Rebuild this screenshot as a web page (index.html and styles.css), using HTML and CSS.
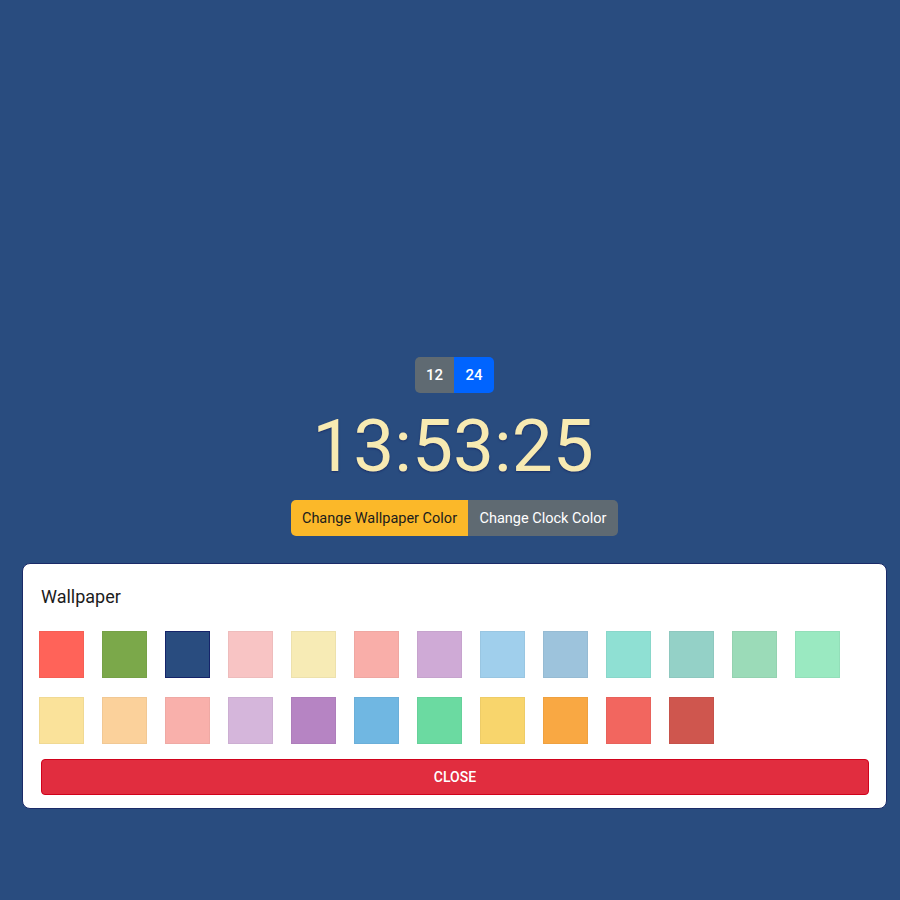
FILE: index.html
```html
<!DOCTYPE html>
<html>
<head>
<meta charset="utf-8">
<link rel="stylesheet" href="styles.css">
</head>
<body>
<div class="page">
  <div class="toggle">
    <button class="tbtn t12">12</button><button class="tbtn t24">24</button>
  </div>
  <div class="clock">13:53:25</div>
  <div class="modes">
    <button class="mbtn wall">Change Wallpaper Color</button><button class="mbtn clk">Change Clock Color</button>
  </div>
  <div class="card">
    <div class="title">Wallpaper</div>
    <div class="swatches">
      <span class="sw" style="background:#ff6359"></span>
      <span class="sw" style="background:#7ba84a"></span>
      <span class="sw" style="background:#294c7f;border-color:#15246a"></span>
      <span class="sw" style="background:#f8c4c4"></span>
      <span class="sw" style="background:#f7ebb5"></span>
      <span class="sw" style="background:#f9aea9"></span>
      <span class="sw" style="background:#cfaad6"></span>
      <span class="sw" style="background:#a0cfec"></span>
      <span class="sw" style="background:#9dc3dc"></span>
      <span class="sw" style="background:#8fe0d3"></span>
      <span class="sw" style="background:#94d1c7"></span>
      <span class="sw" style="background:#9bdbb8"></span>
      <span class="sw" style="background:#9ae9c1"></span>
      <span class="sw" style="background:#fae29a"></span>
      <span class="sw" style="background:#fbd19b"></span>
      <span class="sw" style="background:#f9b0ab"></span>
      <span class="sw" style="background:#d5b6db"></span>
      <span class="sw" style="background:#b684c3"></span>
      <span class="sw" style="background:#70b7e2"></span>
      <span class="sw" style="background:#6bdaa1"></span>
      <span class="sw" style="background:#f8d56c"></span>
      <span class="sw" style="background:#f9a843"></span>
      <span class="sw" style="background:#f2665f"></span>
      <span class="sw" style="background:#cf564e"></span>
    </div>
    <button class="close">CLOSE</button>
  </div>
</div>
</body>
</html>
```
FILE: styles.css
```css
html, body {
  margin: 0;
  padding: 0;
  height: 100%;
  background: #294c7f;
  font-family: Roboto, "Liberation Sans", sans-serif;
}
.page {
  display: flex;
  flex-direction: column;
  align-items: center;
  padding-top: 357px;
}
.toggle {
  display: flex;
  border-radius: 5px;
  overflow: hidden;
  margin-left: 9px;
}
.tbtn {
  border: none;
  height: 36px;
  width: 39px;
  color: #fff;
  font-family: inherit;
  font-size: 15px;
  font-weight: 500;
  padding: 0;
}
.t12 { background: #5f6a72; }
.t24 { background: #0064ff; width: 40px; }
.clock {
  color: #f7eab2;
  font-size: 73px;
  font-weight: 400;
  line-height: 1;
  height: 107px;
  display: flex;
  align-items: center;
  margin-left: 6px;
  text-shadow: 0 1px 2px #1a2d66;
}
.modes {
  display: flex;
  border-radius: 5px;
  overflow: hidden;
  margin-left: 9px;
}
.mbtn {
  border: none;
  height: 36px;
  font-family: inherit;
  font-size: 14.5px;
  padding: 0;
  white-space: nowrap;
}
.wall { background: #fbb829; color: #1c1c1c; width: 177px; }
.clk { background: #5f6a72; color: #fff; width: 150px; }
.card {
  align-self: flex-start;
  margin-top: 27px;
  margin-left: 22px;
  width: 865px;
  box-sizing: border-box;
  background: #fff;
  border: 1px solid #1b2b68;
  border-radius: 8px;
  padding: 18px 18px 13px 16px;
}
.title {
  font-size: 18px;
  color: #1c1c1c;
  line-height: 30px;
  padding-left: 2px;
}
.swatches {
  display: grid;
  grid-template-columns: repeat(13, 45px);
  column-gap: 18px;
  row-gap: 19px;
  margin-top: 19px;
}
.sw {
  display: block;
  height: 47px;
  box-sizing: border-box;
  border: 1px solid rgba(0, 0, 0, 0.04);
}
.close {
  display: block;
  height: 36px;
  margin-top: 15px;
  margin-left: 2px;
  width: calc(100% - 1px);
  background: #e12d3f;
  border: 1px solid #d0021b;
  border-radius: 4px;
  color: #fff;
  font-family: inherit;
  font-size: 14px;
  font-weight: 500;
}
```
